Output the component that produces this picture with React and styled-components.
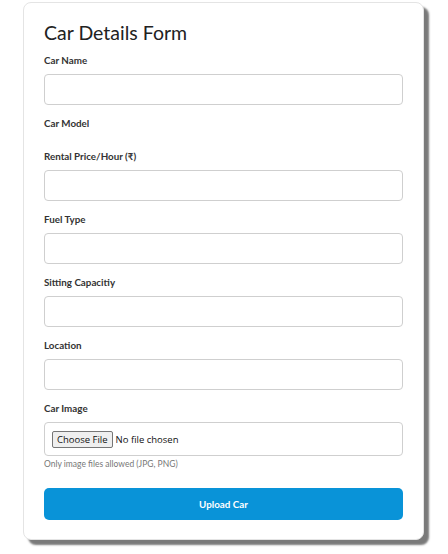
import React from 'react';
import styled, { createGlobalStyle } from 'styled-components';

const GlobalStyle = createGlobalStyle`
  html, body {
    margin: 0;
    background: #fff;
    font-family: Lato, "Open Sans", sans-serif;
  }
`;

const fields = [
  { label: 'Car Name', input: true },
  { label: 'Car Model', input: false },
  { label: 'Rental Price/Hour (₹)', input: true },
  { label: 'Fuel Type', input: true },
  { label: 'Sitting Capacitiy', input: true },
  { label: 'Location', input: true },
];

const App = () => {
  return (
    <Page>
      <GlobalStyle />
      <Card>
        <Title>Car Details Form</Title>
        <Form onSubmit={(e) => e.preventDefault()}>
          {fields.map((f) => (
            <Group key={f.label} $empty={!f.input}>
              <Label>{f.label}</Label>
              {f.input && <Input type='text' />}
            </Group>
          ))}
          <Group>
            <Label>Car Image</Label>
            <FileBox>
              <FileInput type='file' accept='image/png, image/jpeg' />
            </FileBox>
            <Hint>Only image files allowed (JPG, PNG)</Hint>
          </Group>
          <SubmitButton type='submit'>Upload Car</SubmitButton>
        </Form>
      </Card>
    </Page>
  );
};

const Page = styled.div`
  box-sizing: border-box;
  width: 448px;
  min-height: 554px;
  padding: 2px 0 14px 23px;
`;

const Card = styled.div`
  box-sizing: border-box;
  width: 401px;
  padding: 16px 20px 19px;
  background: #fff;
  border: 1px solid #e4e4e4;
  border-radius: 8px;
  box-shadow: 5px 5px 2px #7a7a7a;
`;

const Title = styled.h2`
  margin: 0 0 7px;
  font-family: Lato, sans-serif;
  font-size: 19.5px;
  font-weight: 400;
  line-height: 28px;
  color: #222;
`;

const Form = styled.form`
  display: flex;
  flex-direction: column;
`;

const Group = styled.div`
  display: flex;
  flex-direction: column;
  margin-bottom: ${(p) => (p.$empty ? '13px' : '12px')};
`;

const Label = styled.label`
  font-size: 9.8px;
  font-weight: 700;
  line-height: 12px;
  color: #333;
  margin-bottom: 8px;
`;

const Input = styled.input`
  box-sizing: border-box;
  height: 31px;
  width: 100%;
  border: 1px solid #cfcfcf;
  border-radius: 4px;
  padding: 0 8px;
  outline: none;
  font-family: inherit;
`;

const FileBox = styled.div`
  box-sizing: border-box;
  height: 34px;
  border: 1px solid #cfcfcf;
  border-radius: 4px;
  padding: 0 7px;
  display: flex;
  align-items: center;
`;

const FileInput = styled.input`
  font-family: "Open Sans", Lato, sans-serif;
  font-size: 9.5px;
  color: #111;

  &::file-selector-button {
    font-family: inherit;
    font-size: 9.5px;
    color: #111;
    background: #efefef;
    border: 1px solid #767676;
    border-radius: 2px;
    padding: 1px 4px;
    margin-right: 3px;
  }
`;

const Hint = styled.div`
  margin-top: 2px;
  font-size: 8.5px;
  line-height: 12px;
  color: #777;
`;

const SubmitButton = styled.button`
  margin-top: 6px;
  height: 32px;
  border: none;
  border-radius: 5px;
  background: #0993d8;
  color: #fff;
  font-family: Lato, sans-serif;
  font-size: 9.8px;
  font-weight: 700;
  cursor: pointer;
`;

export default App;
